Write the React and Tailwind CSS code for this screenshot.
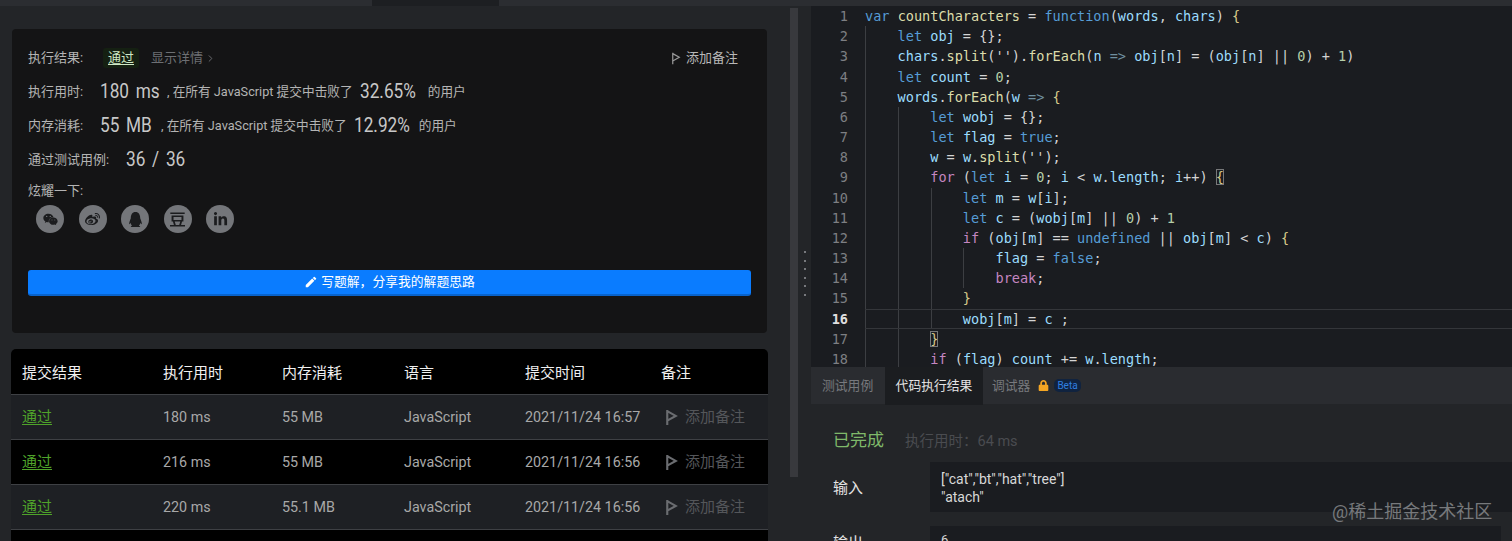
import React from 'react';
import { FaWeixin, FaWeibo, FaQq, FaLinkedinIn, FaLock } from 'react-icons/fa';
import { SiDouban } from 'react-icons/si';
import { MdEdit } from 'react-icons/md';
import { ChevronRight } from 'lucide-react';

const K = 'text-[#569cd6]';
const V = 'text-[#9cdcfe]';
const F = 'text-[#dcdcaa]';
const C = 'text-[#c586c0]';
const N = 'text-[#b5cea8]';
const T = 'text-[#d4d4d4]';
const B = 'text-[#d7c98a]';
const G = 'text-[#6f8f9f]';

const guideLeft = ['left-[0px]', 'left-[33px]', 'left-[66px]', 'left-[98px]'];

const codeLines = [
  { g: [], t: [[K, 'var '], [F, 'countCharacters'], [T, ' = '], [K, 'function'], [T, '('], [V, 'words'], [T, ', '], [V, 'chars'], [T, ') '], [B, '{']] },
  { g: [0], t: [[K, '    let '], [V, 'obj'], [T, ' = {};']] },
  { g: [0], t: [[V, '    chars'], [T, '.'], [F, 'split'], [T, "('')."], [F, 'forEach'], [T, '('], [V, 'n'], [G, ' => '], [V, 'obj'], [T, '['], [V, 'n'], [T, '] = ('], [V, 'obj'], [T, '['], [V, 'n'], [T, '] || '], [N, '0'], [T, ') + '], [N, '1'], [T, ')']] },
  { g: [0], t: [[K, '    let '], [V, 'count'], [T, ' = '], [N, '0'], [T, ';']] },
  { g: [0], t: [[V, '    words'], [T, '.'], [F, 'forEach'], [T, '('], [V, 'w'], [G, ' => '], [B, '{']] },
  { g: [0, 1], t: [[K, '        let '], [V, 'wobj'], [T, ' = {};']] },
  { g: [0, 1], t: [[K, '        let '], [V, 'flag'], [T, ' = '], [K, 'true'], [T, ';']] },
  { g: [0, 1], t: [[V, '        w'], [T, ' = '], [V, 'w'], [T, '.'], [F, 'split'], [T, "('');"]] },
  { g: [0, 1], t: [[C, '        for'], [T, ' ('], [K, 'let '], [V, 'i'], [T, ' = '], [N, '0'], [T, '; '], [V, 'i'], [T, ' < '], [V, 'w'], [T, '.'], [V, 'length'], [T, '; '], [V, 'i'], [T, '++) '], ['box', '{']] },
  { g: [0, 1, 2], t: [[K, '            let '], [V, 'm'], [T, ' = '], [V, 'w'], [T, '['], [V, 'i'], [T, '];']] },
  { g: [0, 1, 2], t: [[K, '            let '], [V, 'c'], [T, ' = ('], [V, 'wobj'], [T, '['], [V, 'm'], [T, '] || '], [N, '0'], [T, ') + '], [N, '1']] },
  { g: [0, 1, 2], t: [[C, '            if'], [T, ' ('], [V, 'obj'], [T, '['], [V, 'm'], [T, '] == '], [K, 'undefined'], [T, ' || '], [V, 'obj'], [T, '['], [V, 'm'], [T, '] < '], [V, 'c'], [T, ') '], [B, '{']] },
  { g: [0, 1, 2, 3], t: [[V, '                flag'], [T, ' = '], [K, 'false'], [T, ';']] },
  { g: [0, 1, 2, 3], t: [[C, '                break'], [T, ';']] },
  { g: [0, 1, 2], t: [[B, '            }']] },
  { g: [0, 1, 2], active: true, t: [[V, '            wobj'], [T, '['], [V, 'm'], [T, '] = '], [V, 'c'], [T, ' ;']] },
  { g: [0, 1], t: [[T, '        '], ['box', '}']] },
  { g: [0, 1], t: [[C, '        if'], [T, ' ('], [V, 'flag'], [T, ') '], [V, 'count'], [T, ' += '], [V, 'w'], [T, '.'], [V, 'length'], [T, ';']] },
];

const submissions = [
  { time: '180 ms', mem: '55 MB', at: '2021/11/24 16:57', bg: 'bg-[#1e2024]' },
  { time: '216 ms', mem: '55 MB', at: '2021/11/24 16:56', bg: 'bg-black' },
  { time: '220 ms', mem: '55.1 MB', at: '2021/11/24 16:56', bg: 'bg-[#1e2024]' },
];

const cols = 'grid grid-cols-[141px_119px_122px_121px_136px_1fr] pl-[11px]';
// the numbers are a condensed DIN-like face in the picture, Roboto squeezed sideways comes closest
const stat = 'inline-block text-[21px] text-[#c8c8c8] whitespace-nowrap scale-x-[0.82] origin-left';

const FlagIcon = ({ className, width = 1.5 }) => (
  <svg viewBox="0 0 12 16" fill="none" stroke="currentColor" strokeWidth={width} className={className}>
    <path d="M2 1v14M2 2l8 4.5L2 11" />
  </svg>
);

const StatRow = ({ label, value, pct, pctWidth, comma }) => (
  <div className="flex items-center h-[34px] text-[13px] text-[#b4b4b4]">
    <span className="w-[72px]">{label}</span>
    <span className="w-[67px]"><span className={`${stat} [word-spacing:3px]`}>{value}</span></span>
    <span className={`text-[12.7px] whitespace-nowrap ${comma || ''}`}>, 在所有 JavaScript 提交中击败了</span>
    <span className={`ml-[7px] ${pctWidth}`}><span className={stat}>{pct}</span></span>
    <span className="ml-[10px] text-[12.7px]">的用户</span>
  </div>
);

const Share = ({ children }) => (
  <div className="w-[28px] h-[28px] rounded-full bg-[#74767a] flex items-center justify-center text-[#1b1c1e] text-[15px]">
    {children}
  </div>
);

const ResultCard = () => (
  <div className="mt-[23px] ml-[12px] w-[755px] h-[304px] rounded-[4px] bg-[#141415] px-[16px] pt-[12px]">
    <div className="flex items-center h-[34px] text-[13px] text-[#b4b4b4]">
      <span className="w-[75px]">执行结果:</span>
      <span className="text-[#cfe8c4] underline underline-offset-2 bg-[#152012] px-[5px] rounded-[3px] w-[36px] mr-[12px]">通过</span>
      <span className="text-[#6d6f73] flex items-center">显示详情<ChevronRight size={11} className="ml-[2px]" /></span>
      <span className="ml-auto mr-[13px] flex items-center text-[#b8b8b8]">
        <FlagIcon className="w-[10px] h-[13px] mr-[5px] text-[#9a9a9a]" />添加备注
      </span>
    </div>
    <StatRow label="执行用时:" value="180 ms" pct="32.65%" pctWidth="w-[58px]" />
    <StatRow label="内存消耗:" value="55 MB" pct="12.92%" pctWidth="w-[55px]" comma="-ml-[6px]" />
    <div className="flex items-center h-[34px] text-[13px] text-[#b4b4b4]">
      <span className="w-[98px]">通过测试用例:</span>
      <span className={`${stat} [word-spacing:3px]`}>36 / 36</span>
    </div>
    <div className="text-[13px] text-[#b4b4b4] mt-[5px] leading-[18px]">炫耀一下:</div>
    <div className="flex gap-[14.5px] ml-[8px] mt-[5px]">
      <Share><FaWeixin /></Share>
      <Share><FaWeibo /></Share>
      <Share><FaQq /></Share>
      <Share><SiDouban /></Share>
      <Share><FaLinkedinIn /></Share>
    </div>
    <button className="mt-[37px] w-[723px] h-[26px] rounded-[3px] bg-[#0a7cff] border-b-2 border-[#0863cc] flex items-center justify-center text-[12.8px] text-white">
      <MdEdit className="text-[14px] mr-[3px]" />写题解，分享我的解题思路
    </button>
  </div>
);

const SubmissionTable = () => (
  <div className="mt-[16px] ml-[11px] w-[757px] rounded-t-[5px] bg-black overflow-hidden">
    <div className={`${cols} h-[46px] pt-[3px] items-center text-[15px] text-[#f0f0f0] border-b border-[#3e4044]`}>
      <span>提交结果</span>
      <span>执行用时</span>
      <span>内存消耗</span>
      <span>语言</span>
      <span>提交时间</span>
      <span>备注</span>
    </div>
    {submissions.map((s, i) => (
      <div key={i} className={`${cols} ${s.bg} h-[45px] pt-[1px] items-center text-[14.3px] text-[#a8a8a8] border-b border-[#3e4044]`}>
        <span className="text-[15px] text-[#4fa32a] underline underline-offset-2">通过</span>
        <span>{s.time}</span>
        <span>{s.mem}</span>
        <span>JavaScript</span>
        <span>{s.at}</span>
        <span className="flex items-center text-[15px] text-[#54565a] ml-[4px]">
          <FlagIcon width={2} className="w-[13px] h-[17px] mr-[7px] text-[#6a6c70]" />添加备注
        </span>
      </div>
    ))}
    <div className="h-[12px]" />
  </div>
);

const CodeLine = ({ line, n }) => (
  <div className={`flex h-[20.18px] leading-[20.18px] ${line.active ? 'relative' : ''}`}>
    <span className={`w-[37px] shrink-0 text-right ${line.active ? 'text-[#e0e0e0] font-bold' : 'text-[#7d7f83]'}`}>{n}</span>
    <div className={`relative ml-[17px] flex-1 whitespace-pre ${line.active ? 'border-y border-[#34363a] leading-[18.18px]' : ''}`}>
      {line.g.map((g) => (
        <span key={g} className={`absolute top-0 bottom-0 w-px bg-[#3c3e42] ${guideLeft[g]}`} />
      ))}
      {line.t.map(([c, s], i) =>
        c === 'box' ? (
          <span key={i} className="text-[#d7c98a] outline outline-1 -outline-offset-1 outline-[#77787a]">{s}</span>
        ) : (
          <span key={i} className={c}>{s}</span>
        )
      )}
    </div>
  </div>
);

export default function App() {
  return (
    <div className="relative w-[1512px] h-[541px] overflow-hidden bg-[#232528] font-['Roboto','Noto_Sans_CJK_SC',sans-serif]">
      <div className="flex h-[6px] bg-[#2b2d31]">
        <div className="ml-[372px] w-[127px] bg-[#1d1f22]" />
      </div>
      <div className="flex h-[535px]">
        <div className="w-[790px] shrink-0">
          <ResultCard />
          <SubmissionTable />
        </div>
        <div className="w-[8px] h-[469px] mt-[2px] bg-[#38393d] shrink-0" />
        <div className="w-[13px] shrink-0 flex flex-col items-center gap-[6.5px] pt-[245px]">
          {[0, 1, 2, 3, 4, 5].map((d) => (
            <span key={d} className="w-[2px] h-[2px] bg-[#77797d]" />
          ))}
        </div>
        <div className="flex-1 flex flex-col min-w-0">
          <div className="h-[361px] bg-[#1a1c20] overflow-hidden font-['DejaVu_Sans_Mono',monospace] text-[13.56px]">
            {codeLines.map((line, i) => (
              <CodeLine key={i} line={line} n={i + 1} />
            ))}
          </div>
          <div className="h-[37px] bg-[#2a2c30] flex text-[12.8px] text-[#77797d] relative">
            <span className="ml-[11px] w-[63px] leading-[37px]">测试用例</span>
            <span className="w-[98px] h-[38px] bg-[#1b1d20] text-center leading-[37px] text-[#e4e4e4]">代码执行结果</span>
            <span className="ml-[9px] flex items-center">
              调试器
              <FaLock className="ml-[8px] text-[11px] text-[#f5a623]" />
              <span className="ml-[5px] px-[3px] rounded-[5px] bg-[#10233f] text-[#2f7fe0] text-[10px] leading-[13px]">Beta</span>
            </span>
          </div>
          <div className="flex-1 pl-[22px] overflow-hidden">
            <div className="flex items-baseline mt-[24px] h-[24px]">
              <span className="text-[17px] text-[#7fb96a]">已完成</span>
              <span className="ml-[21px] text-[14.5px] text-[#4a4c50]">执行用时：64 ms</span>
            </div>
            <div className="flex mt-[10px]">
              <span className="w-[97px] text-[15px] text-[#e4e4e4] leading-[52px]">输入</span>
              <div className="flex-1 h-[50px] bg-[#1a1c20] pl-[11px] pt-[8px] text-[14px] leading-[18px] text-[#d8d8d8]">
                <div>["cat","bt","hat","tree"]</div>
                <div>"atach"</div>
              </div>
            </div>
            <div className="flex mt-[12px]">
              <span className="w-[97px] text-[15px] text-[#e4e4e4] leading-[34px]">输出</span>
              <div className="w-[571px] h-[50px] bg-[#1a1c20] pl-[11px] pt-[5px] text-[13px] leading-[18px] text-[#d8d8d8]">6</div>
            </div>
          </div>
        </div>
      </div>
      <span className="absolute left-[1332px] top-[500px] text-[18px] leading-[24px] text-[#77797c]">@稀土掘金技术社区</span>
    </div>
  );
}
